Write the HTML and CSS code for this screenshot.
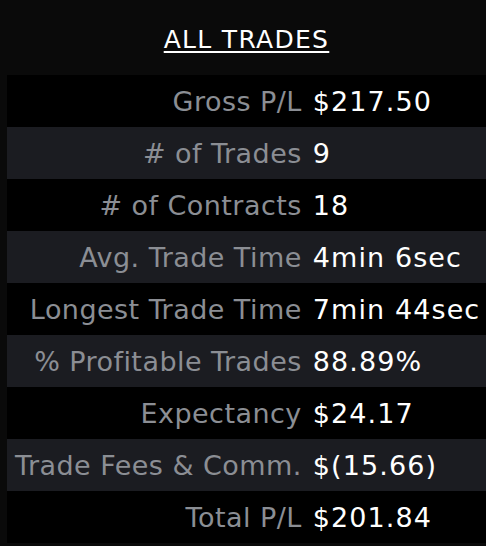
FILE: index.html
```html
<!DOCTYPE html>
<html lang="en">
<head>
  <meta charset="UTF-8" />
  <meta name="viewport" content="width=device-width, initial-scale=1.0"/>
  <title>All Trades</title>
  <link rel="stylesheet" href="styles.css">
</head>
<body>
  <h2 class="title">ALL TRADES</h2>

  <table class="stats">
    <tr><td class="label">Gross P/L</td><td class="value">$217.50</td></tr>
    <tr><td class="label"># of Trades</td><td class="value">9</td></tr>
    <tr><td class="label"># of Contracts</td><td class="value">18</td></tr>
    <tr><td class="label">Avg. Trade Time</td><td class="value">4min 6sec</td></tr>
    <tr><td class="label">Longest Trade Time</td><td class="value">7min 44sec</td></tr>
    <tr><td class="label">% Profitable Trades</td><td class="value">88.89%</td></tr>
    <tr><td class="label">Expectancy</td><td class="value">$24.17</td></tr>
    <tr><td class="label">Trade Fees &amp; Comm.</td><td class="value">$(15.66)</td></tr>
    <tr><td class="label">Total P/L</td><td class="value">$201.84</td></tr>
  </table>
</body>
</html>
```

FILE: styles.css
```css
body {
  font-family: 'DejaVu Sans', sans-serif;
  background: #0a0a0a;
  color: #fff;
  margin: 0;
  padding: 0 0 0 7px;
  overflow: hidden;
}

.title {
  font-size: 25px;
  font-weight: normal;
  letter-spacing: 1.3px;
  text-align: center;
  text-decoration: underline;
  text-decoration-thickness: 2px;
  text-underline-offset: 3px;
  margin: 0;
  padding: 26px 0 21px;
  line-height: 28px;
}

.stats {
  border-collapse: collapse;
  font-size: 27px;
  white-space: nowrap;
}

.stats tr {
  height: 52px;
  background: #000;
}

.stats tr:nth-child(even) {
  background: #1b1c21;
}

.label {
  text-align: right;
  color: #8b8e94;
  letter-spacing: 0.45px;
  padding: 0 5px 0 8px;
}

.value {
  color: #fff;
  letter-spacing: 1.1px;
  padding: 0 7px 0 6px;
}
```
